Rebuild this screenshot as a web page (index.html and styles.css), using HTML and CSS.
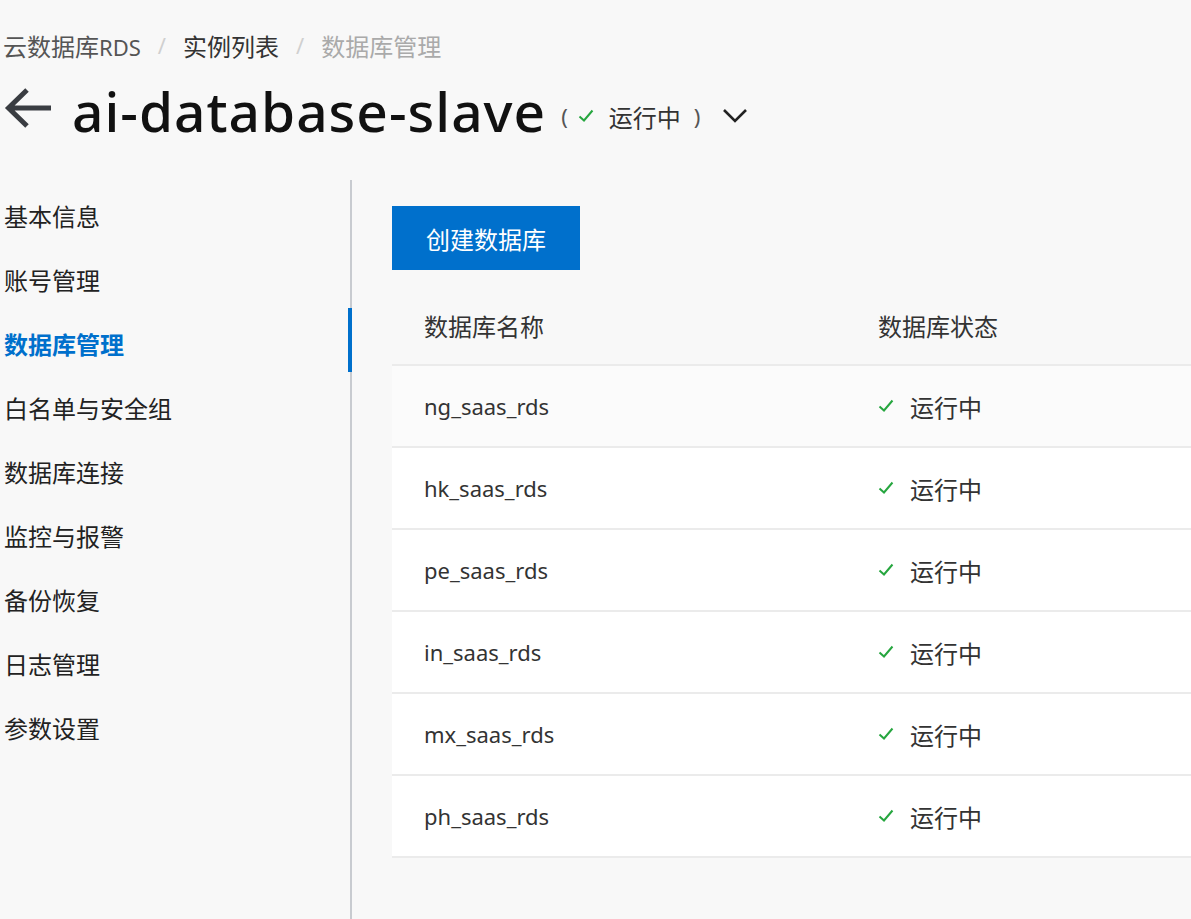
FILE: index.html
```html
<!DOCTYPE html>
<html lang="zh-CN">
<head>
<meta charset="utf-8">
<title>数据库管理</title>
<link rel="stylesheet" href="styles.css">
</head>
<body>
<nav class="crumbs">
  <span class="crumb">云数据库<span class="lat">RDS</span></span>
  <span class="sep">/</span>
  <span class="crumb dark">实例列表</span>
  <span class="sep">/</span>
  <span class="crumb current">数据库管理</span>
</nav>
<header class="head">
  <svg class="back" width="50" height="42" viewBox="0 0 50 42"><path d="M48 21H6M24 3L5.5 21 24 39" fill="none" stroke="#3a3d42" stroke-width="5"/></svg>
  <h1 class="title">ai-database-slave</h1>
  <span class="status">
    <span class="paren">(</span>
    <svg class="ok" width="16" height="14" viewBox="0 0 16 14"><path d="M1.5 7.5l4.5 4 8.5-10" fill="none" stroke="#26a63f" stroke-width="2"/></svg>
    <span>运行中</span>
    <span class="paren">)</span>
  </span>
  <svg class="chev" width="26" height="16" viewBox="0 0 26 16"><path d="M2 2l11 11L24 2" fill="none" stroke="#222" stroke-width="2.6"/></svg>
</header>
<div class="main">
  <aside class="side">
    <div class="item">基本信息</div>
    <div class="item">账号管理</div>
    <div class="item active">数据库管理</div>
    <div class="item">白名单与安全组</div>
    <div class="item">数据库连接</div>
    <div class="item">监控与报警</div>
    <div class="item">备份恢复</div>
    <div class="item">日志管理</div>
    <div class="item">参数设置</div>
  </aside>
  <section class="content">
    <button class="btn">创建数据库</button>
    <div class="table">
      <div class="row headrow"><div class="cell">数据库名称</div><div class="cell">数据库状态</div></div>
      <div class="row hover"><div class="cell lat">ng_saas_rds</div><div class="cell st"><svg class="ok" width="16" height="14" viewBox="0 0 16 14"><path d="M1.5 7.5l4.5 4 8.5-10" fill="none" stroke="#26a63f" stroke-width="2"/></svg>运行中</div></div>
      <div class="row"><div class="cell lat">hk_saas_rds</div><div class="cell st"><svg class="ok" width="16" height="14" viewBox="0 0 16 14"><path d="M1.5 7.5l4.5 4 8.5-10" fill="none" stroke="#26a63f" stroke-width="2"/></svg>运行中</div></div>
      <div class="row"><div class="cell lat">pe_saas_rds</div><div class="cell st"><svg class="ok" width="16" height="14" viewBox="0 0 16 14"><path d="M1.5 7.5l4.5 4 8.5-10" fill="none" stroke="#26a63f" stroke-width="2"/></svg>运行中</div></div>
      <div class="row"><div class="cell lat">in_saas_rds</div><div class="cell st"><svg class="ok" width="16" height="14" viewBox="0 0 16 14"><path d="M1.5 7.5l4.5 4 8.5-10" fill="none" stroke="#26a63f" stroke-width="2"/></svg>运行中</div></div>
      <div class="row"><div class="cell lat">mx_saas_rds</div><div class="cell st"><svg class="ok" width="16" height="14" viewBox="0 0 16 14"><path d="M1.5 7.5l4.5 4 8.5-10" fill="none" stroke="#26a63f" stroke-width="2"/></svg>运行中</div></div>
      <div class="row"><div class="cell lat">ph_saas_rds</div><div class="cell st"><svg class="ok" width="16" height="14" viewBox="0 0 16 14"><path d="M1.5 7.5l4.5 4 8.5-10" fill="none" stroke="#26a63f" stroke-width="2"/></svg>运行中</div></div>
    </div>
  </section>
</div>
</body>
</html>
```
FILE: styles.css
```css
* { box-sizing: border-box; }
html, body { margin: 0; padding: 0; }
body {
  background: #f8f8f8;
  font-family: "Noto Sans", "Noto Sans CJK SC", sans-serif;
  color: #333;
  width: 1191px;
  height: 919px;
  overflow: hidden;
}
.lat { font-size: 22px; }
.crumbs {
  display: flex;
  align-items: center;
  height: 34px;
  margin-top: 28px;
  padding-left: 3px;
  font-size: 24px;
  color: #555;
}
.crumb.dark { color: #333; }
.crumb.current { color: #aaa; }
.sep { color: #d0d0d0; margin: 0 17px; font-size: 22px; }
.head {
  display: flex;
  align-items: center;
  height: 70px;
  margin-top: 13px;
  padding-left: 3px;
}
.back { margin-right: 19px; margin-top: -4px; }
.title {
  margin: 0;
  font-size: 55px;
  font-weight: 500;
  color: #111;
  letter-spacing: 1px;
}
.status {
  display: flex;
  align-items: center;
  font-size: 24px;
  color: #333;
  margin-left: 15px;
  margin-top: 12px;
}
.status .ok { margin: 0 15px 0 10px; }
.status .paren { color: #555; font-size: 22px; }
.status .paren:last-child { margin-left: 13px; }
.chev { margin-left: 22px; margin-top: 12px; }
.main {
  display: flex;
  margin-top: 35px;
}
.side {
  width: 352px;
  flex: none;
  border-right: 2px solid #c8cbd0;
  height: 740px;
}
.item {
  position: relative;
  height: 64px;
  padding: 6px 0 0 4px;
  display: flex;
  align-items: center;
  font-size: 24px;
  color: #222;
}
.item.active { color: #0070cc; font-weight: 700; }
.item.active::after {
  content: "";
  position: absolute;
  right: -2px;
  top: 0;
  width: 4px;
  height: 64px;
  background: #0070cc;
}
.content {
  flex: 1;
  padding: 26px 0 0 40px;
}
.btn {
  width: 188px;
  height: 64px;
  border: 0;
  background: #0070cc;
  color: #fff;
  font-family: inherit;
  font-size: 24px;
  padding: 0;
}
.table { margin-top: 20px; }
.row {
  display: grid;
  grid-template-columns: 454px 1fr;
  height: 82px;
  background: #fff;
  border-bottom: 2px solid #ebebeb;
  align-items: center;
  font-size: 24px;
  color: #333;
}
.row.headrow { height: 76px; background: transparent; padding-top: 0; padding-bottom: 4px; }
.row.hover { background: #fbfbfb; }
.cell { padding-left: 32px; }
.st { display: flex; align-items: center; }
.st .ok { margin-right: 16px; }
```
